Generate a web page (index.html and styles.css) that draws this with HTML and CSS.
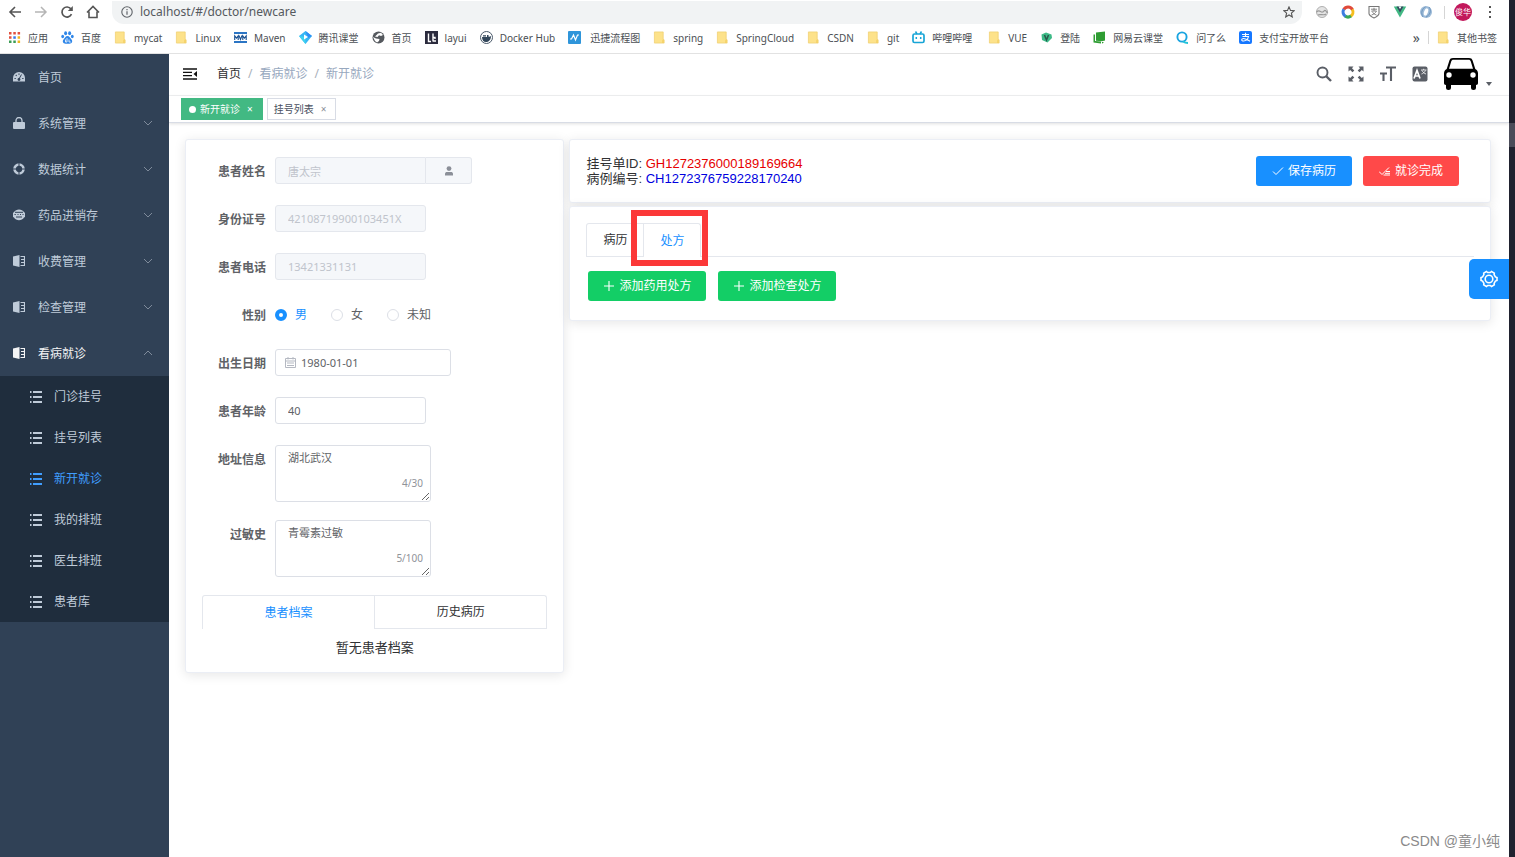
FILE: index.html
```html
<!DOCTYPE html>
<html lang="zh-CN">
<head>
<meta charset="utf-8">
<title>新开就诊</title>
<link rel="stylesheet" href="styles.css">
</head>
<body>
<svg class="sprite" aria-hidden="true">
  <symbol id="folder" viewBox="0 0 13 14"><path d="M1 1h9.500v8.500h1v3.500H1z" fill="#fde28a" stroke="#f0d070" stroke-width=".8"/><path d="M9.500 13V10l1.500-1v4z" fill="#f3cf62"/></symbol>
  <symbol id="chevron" viewBox="0 0 10 10"><path d="M1 3l4 4 4-4" fill="none" stroke="currentColor" stroke-width="1"/></symbol>
  <symbol id="list" viewBox="0 0 12 12"><path d="M0 0h1.500v2H0zM3 0h9v2H3zM0 5h1.500v2H0zM3 5h9v2H3zM0 10h1.500v2H0zM3 10h9v2H3z" fill="currentColor"/></symbol>
  <symbol id="book" viewBox="0 0 12 12"><path d="M0 1.500L6.500 0v12L0 10.500z" fill="currentColor"/><path d="M7.500 1.500h4v9h-4M8 4.500h3M8 7.500h3" fill="none" stroke="currentColor" stroke-width="1.200"/></symbol>
  <symbol id="plus" viewBox="0 0 12 12"><path d="M6 1v10M1 6h10" stroke="currentColor" stroke-width="1.100"/></symbol>
</svg>

<div class="window">
  <header class="browser">
    <div class="toolbar">
      <button class="nav-btn" aria-label="后退"><svg viewBox="0 0 14 14"><path d="M13 7H2M7 2L2 7l5 5" fill="none" stroke="#555" stroke-width="1.600"/></svg></button>
      <button class="nav-btn" aria-label="前进"><svg viewBox="0 0 14 14"><path d="M1 7h11M7 2l5 5-5 5" fill="none" stroke="#b5b5b5" stroke-width="1.500"/></svg></button>
      <button class="nav-btn" aria-label="刷新"><svg viewBox="0 0 14 14"><path d="M11.500 9.200A5 5 0 1 1 11 4" fill="none" stroke="#555" stroke-width="1.700"/><path d="M12.800 1v5H7.800z" fill="#555"/></svg></button>
      <button class="nav-btn" aria-label="主页"><svg viewBox="0 0 14 14"><path d="M1 7.500L7 1.500l6 6M3 6.500v6h8v-6" fill="none" stroke="#555" stroke-width="1.600"/></svg></button>
      <div class="address">
        <svg class="i12" viewBox="0 0 12 12"><circle cx="6" cy="6" r="5.200" fill="none" stroke="#5f6368" stroke-width="1.100"/><path d="M6 5.200v3.500M6 3v1.200" stroke="#5f6368" stroke-width="1.200"/></svg>
        <input class="url" type="text" aria-label="地址" value="localhost/#/doctor/newcare">
        <button class="star" aria-label="收藏"><svg class="i12" viewBox="0 0 12 12"><path d="M6 .9l1.500 3.500 3.800.3-2.900 2.500.9 3.800L6 9 2.700 11l.9-3.800L.7 4.700l3.800-.3z" fill="none" stroke="#555" stroke-width="1.100"/></svg></button>
      </div>
      <div class="extensions">
        <svg viewBox="0 0 14 14"><circle cx="7" cy="7" r="5.500" fill="#e4e4e4" stroke="#b0b0b0"/><path d="M1.500 7c3-3 4 .5 6 0S9 4.500 10.500 5.500 11 8 13 7M3 10c2-1.500 6 1 8-1" fill="none" stroke="#999" stroke-width="1.200"/></svg>
        <svg viewBox="0 0 14 14" fill="none" stroke-width="3"><path d="M2.800 4.500A5 5 0 0 1 11.500 4.800" stroke="#e04a3a"/><path d="M11.300 4.500A5 5 0 0 1 9.500 11.300" stroke="#f5bd1c"/><path d="M10 11A5 5 0 0 1 4 11" stroke="#3aa757"/><path d="M4.500 11.300A5 5 0 0 1 2.800 4.300" stroke="#3c7de0"/></svg>
        <svg viewBox="0 0 14 14"><path d="M2 1.500h10v7c0 2-3 3.500-5 4.500-2-1-5-2.500-5-4.500z" fill="none" stroke="#777" stroke-width="1.100"/><path d="M4 4.200h6M7 2.800v3M4.500 6h5C8.500 8 6.500 9.500 4.500 10M5 6.500c1 1.500 2.500 3 4.500 3.500" fill="none" stroke="#777" stroke-width=".9"/></svg>
        <svg viewBox="0 0 14 14"><path d="M.8 1.500h12.400L7 12.500z" fill="#41b883"/><path d="M3.500 1.500h7L7 7.500z" fill="#35495e"/><path d="M5.500 1.500h3L7 4z" fill="#fff"/></svg>
        <svg viewBox="0 0 14 14"><circle cx="7" cy="7" r="6" fill="#9dbbd8"/><path d="M4 12C1.500 8 3 3.500 6.500 2M10 2c3 4 .5 8.500-3 10" fill="none" stroke="#6d94bd"/><ellipse cx="7" cy="7" rx="1.900" ry="3.800" fill="#fff" transform="rotate(20 7 7)"/></svg>
      </div>
      <span class="rule"></span>
      <button class="profile">俊华</button>
      <button class="more" aria-label="菜单"><svg viewBox="0 0 4 14"><path d="M1 1h2v2H1zM1 6h2v2H1zM1 11h2v2H1z" fill="#555"/></svg></button>
    </div>
    <nav class="bookmarks">
      <a href="#"><svg viewBox="0 0 13 13"><path d="M1 1h2.500v2.500H1zM5.300 1h2.500v2.500H5.300zM9.600 1h2.500v2.500H9.600zM1 5.300h2.500v2.500H1z" fill="#e2503f"/><path d="M5.300 5.300h2.500v2.500H5.300z" fill="#3b78e7"/><path d="M1 9.600h2.500v2.500H1zM5.300 9.600h2.500v2.500H5.300z" fill="#3c9d55"/><path d="M9.600 5.300h2.500v2.500H9.600zM9.600 9.600h2.500v2.500H9.600z" fill="#f0b51e"/></svg>应用</a>
      <a href="#"><svg viewBox="0 0 13 13" fill="#2f86e8"><ellipse cx="4.600" cy="2.300" rx="1.500" ry="2"/><ellipse cx="8.600" cy="2.300" rx="1.500" ry="2"/><ellipse cx="1.700" cy="5.500" rx="1.400" ry="1.800"/><ellipse cx="11.300" cy="5.500" rx="1.400" ry="1.800"/><path d="M6.500 5c2 0 2.500 2 4 3.500 1.600 2 .2 4.200-2 4.200H4.500c-2.200 0-3.600-2.200-2-4.200C4 7 4.500 5 6.500 5z"/><path d="M4.500 8.500v2.500h1.500V7M8 8.500v2.500h1.800" stroke="#fff" stroke-width=".8" fill="none"/></svg>百度</a>
      <a href="#"><svg><use href="#folder"/></svg>mycat</a>
      <a href="#"><svg><use href="#folder"/></svg>Linux</a>
      <a href="#"><svg viewBox="0 0 13 13"><path d="M0 1h13v2H0zM0 10h13v2H0z" fill="#2b75c4"/><path d="M.7 9V4.800L2.500 7l1.700-2.200V9M5 4.500L6.500 8.500 8 4.500M8.800 9V4.800l1.700 2.200 1.700-2.200V9" fill="none" stroke="#174f91" stroke-width="1.100"/></svg>Maven</a>
      <a href="#"><svg viewBox="0 0 13 13"><path d="M6.500 0L13 5 6.500 13 0 5z" fill="#36b6f5"/><path d="M0 5l6.500 8V6z" fill="#3ed2ee"/><path d="M6.500 0L13 5 9 7z" fill="#2e8df5"/><path d="M5 3.500L9 6 5 8.500z" fill="#fff"/></svg>腾讯课堂</a>
      <a href="#"><svg viewBox="0 0 13 13"><circle cx="6.500" cy="6.500" r="6" fill="#55595e"/><path d="M6 2.500l3-.8 2 2.300-2 1-2-.8L5.500 6 3 5.500zM1 6l3 1.500 3.500.5-.5 2-2 1.500L3 10z" fill="#fff"/></svg>首页</a>
      <a href="#"><svg viewBox="0 0 13 13"><path d="M0 0h13v13H0z" fill="#2b2b3d"/><path d="M3.500 2.500v8H6M8 2.500v8M8 6.500h2v1.500M8 10h3" fill="none" stroke="#fff" stroke-width="1.400"/></svg>layui</a>
      <a href="#"><svg viewBox="0 0 13 13"><circle cx="6.500" cy="6.500" r="6" fill="#fff" stroke="#4b5a6b"/><path d="M2 6h5V4h1.500v1.500c1 .5 1.500 0 2.500-.5 0 4-2.500 6-5 6S2 9 2 6zM3 4.200h3v1.300H3z" fill="#33475b"/></svg>Docker Hub</a>
      <a href="#" class="wide-gap"><svg viewBox="0 0 13 13"><rect width="13" height="13" rx="1" fill="#2f95da"/><path d="M2 8h1.500L5.500 4l2 5 2-5H11" fill="none" stroke="#fff" stroke-width="1.200"/></svg>迅捷流程图</a>
      <a href="#"><svg><use href="#folder"/></svg>spring</a>
      <a href="#"><svg><use href="#folder"/></svg>SpringCloud</a>
      <a href="#"><svg><use href="#folder"/></svg>CSDN</a>
      <a href="#"><svg><use href="#folder"/></svg>git</a>
      <a href="#"><svg viewBox="0 0 13 13"><rect x="1" y="3" width="11" height="8.500" rx="1.500" fill="none" stroke="#18a5d6" stroke-width="1.700"/><path d="M3.500.5L5 3M9.500.5L8 3M4.300 6v2M8.700 6v2" stroke="#18a5d6" stroke-width="1.500"/></svg>哔哩哔哩</a>
      <a href="#" class="spaced"><svg><use href="#folder"/></svg>VUE</a>
      <a href="#"><svg viewBox="0 0 13 13"><path d="M1.500 3.500L6 1.500l5.500 2L12 7l-4.500 4.500L2 9z" fill="#3dba87"/><path d="M4.500 4L6.500 9l2-5" fill="none" stroke="#27584a" stroke-width="1.500"/></svg>登陆</a>
      <a href="#"><svg viewBox="0 0 13 13"><path d="M3 1.500L12 .5v9l-3 .7-6-.5z" fill="#2f9d33"/><path d="M.5 3.500H2V10l6 .5v2L.5 11.500zM9 11h2l-2 1.800z" fill="#2f9d33"/></svg>网易云课堂</a>
      <a href="#"><svg viewBox="0 0 13 13"><circle cx="6" cy="6" r="4.600" fill="none" stroke="#1aa4e0" stroke-width="1.900"/><path d="M7 10.500c2 1.500 3 1.500 5 1.500" fill="none" stroke="#24c4d9" stroke-width="1.800"/></svg>问了么</a>
      <a href="#"><svg viewBox="0 0 13 13"><rect width="13" height="13" rx="2" fill="#1677ff"/><path d="M3 3.500h7M6.500 1.800v3.700M3.500 5.500h6c-.7 3-3 4.500-5 4.500-2.500 0-2.300-2.500 0-2.500 2 0 4 1.500 6.500 2.800" fill="none" stroke="#fff" stroke-width="1.100"/></svg>支付宝开放平台</a>
      <div class="bookmarks-end">
        <button class="overflow" aria-label="更多书签">»</button>
        <span class="rule"></span>
        <a href="#"><svg><use href="#folder"/></svg>其他书签</a>
      </div>
    </nav>
  </header>

  <div class="app">
    <aside class="sidebar">
      <nav>
        <a class="menu-item" href="#"><svg viewBox="0 0 12 12"><path d="M6 1a6 6 0 0 1 6 6v3.500H0V7a6 6 0 0 1 6-6z" fill="currentColor"/><path d="M6 2.500v1.200M2.800 4l.8.800M1.500 7.500h1.300M9.200 7.500h1.300" stroke="#304156" stroke-width="1.200"/><path d="M8.500 3.500L6 8" stroke="#304156"/><circle cx="6" cy="8.500" r="1.400" fill="#304156"/></svg><span>首页</span></a>
        <button class="menu-item"><svg viewBox="0 0 12 12"><path d="M3 6V3.500a3 3 0 0 1 6 0V6" fill="none" stroke="currentColor" stroke-width="1.300"/><rect y="5" width="12" height="7" rx="1" fill="currentColor"/></svg><span>系统管理</span><svg class="arrow"><use href="#chevron"/></svg></button>
        <button class="menu-item"><svg viewBox="0 0 12 12"><circle cx="6" cy="6" r="4.500" fill="none" stroke="currentColor" stroke-width="2.600"/><path d="M6 0v3M6 9v3M0 6h3M9 6h3" stroke="#304156" stroke-width="1"/></svg><span>数据统计</span><svg class="arrow"><use href="#chevron"/></svg></button>
        <button class="menu-item"><svg viewBox="0 0 12 12"><path d="M1 3C3-.500 9-.500 11 3l1 1v4l-1 .5C9 12 3 12 1 8.500L0 8V4z" fill="currentColor"/><path d="M2 3.300h8M3 8h6M1.500 5.500h1.300M4.500 5.500h1M7 5.500h1M9.500 5.500h1" stroke="#304156" stroke-width="1"/></svg><span>药品进销存</span><svg class="arrow"><use href="#chevron"/></svg></button>
        <button class="menu-item"><svg><use href="#book"/></svg><span>收费管理</span><svg class="arrow"><use href="#chevron"/></svg></button>
        <button class="menu-item"><svg><use href="#book"/></svg><span>检查管理</span><svg class="arrow"><use href="#chevron"/></svg></button>
        <button class="menu-item open"><svg><use href="#book"/></svg><span>看病就诊</span><svg class="arrow"><use href="#chevron"/></svg></button>
        <div class="submenu">
          <a href="#"><svg><use href="#list"/></svg>门诊挂号</a>
          <a href="#"><svg><use href="#list"/></svg>挂号列表</a>
          <a href="#" class="current"><svg><use href="#list"/></svg>新开就诊</a>
          <a href="#"><svg><use href="#list"/></svg>我的排班</a>
          <a href="#"><svg><use href="#list"/></svg>医生排班</a>
          <a href="#"><svg><use href="#list"/></svg>患者库</a>
        </div>
      </nav>
    </aside>

    <main class="main">
      <div class="navbar">
        <button class="fold" aria-label="折叠菜单"><svg viewBox="0 0 14 12"><path d="M0 1h14M0 4.300h9M0 7.700h9M0 11h14" stroke="#111" stroke-width="1.300"/><path d="M14 3v6l-3.500-3z" fill="#111"/></svg></button>
        <nav class="breadcrumb"><a href="#">首页</a><i>/</i><span>看病就诊</span><i>/</i><span>新开就诊</span></nav>
        <div class="tools">
          <button aria-label="搜索"><svg viewBox="0 0 16 16"><circle cx="6.500" cy="6.500" r="5" fill="none" stroke="#5a5e66" stroke-width="1.900"/><path d="M10 10l5 5" stroke="#5a5e66" stroke-width="2.400"/></svg></button>
          <button aria-label="全屏"><svg viewBox="0 0 16 16"><path d="M.5.500h5L4 2.200l2.300 2.300-1.800 1.800L2.200 4 .5 5.500zM15.500.500v5L13.800 4l-2.300 2.300-1.800-1.800L12 2.200 10.500.500zM.5 15.500v-5L2.200 12l2.300-2.300 1.800 1.800L4 13.800l1.500 1.700zM15.500 15.500h-5l1.500-1.700-2.300-2.300 1.800-1.800 2.300 2.300 1.700-1.500z" fill="#5a5e66"/></svg></button>
          <button aria-label="字号"><svg viewBox="0 0 16 16"><path d="M6 1.500h10M11 1.500V15M0 7.500h7M3.500 7.500V15" stroke="#5a5e66" stroke-width="2.100"/></svg></button>
          <button aria-label="语言"><svg viewBox="0 0 16 16"><rect x=".5" y=".5" width="15" height="15" rx="2" fill="#5a5e66"/><path d="M2 12.500L5 4.500l3 8M3 10h4" fill="none" stroke="#fff" stroke-width="1.700"/><path d="M9 4h5.500M11.700 2.800V4M10 4.500c1 2 2.500 3 4 3.500M13.500 4.500c-1 2-2.500 3-4 3.500" fill="none" stroke="#fff" stroke-width=".8"/></svg></button>
          <button class="avatar" aria-label="用户菜单"><svg class="car" viewBox="0 0 34 34"><path d="M9 1h16c2 0 3 .8 3.600 2.500L31.300 12c1.700.8 2.700 2.300 2.700 4.500V26c0 1.200-.6 2-2 2v2.500a2.500 2.500 0 0 1-5 0V28H7v2.500a2.500 2.500 0 0 1-5 0V28c-1.400 0-2-.8-2-2v-9.500C0 14.300 1 12.800 2.700 12L5.400 3.500C6 1.800 7 1 9 1zM9.500 2.800c-1.300 0-1.900.5-2.300 1.700L5 11.700h24l-2.200-7.200c-.4-1.200-1-1.700-2.300-1.700z" fill="#000" fill-rule="evenodd"/><circle cx="5" cy="18" r="2.700" fill="#fff"/><circle cx="29" cy="18" r="2.700" fill="#fff"/></svg><svg class="caret" viewBox="0 0 6 4"><path d="M0 0h6L3 4z" fill="#5a5e66"/></svg></button>
        </div>
      </div>
      <div class="tags">
        <a href="#" class="tag on"><b class="dot"></b>新开就诊<i>×</i></a>
        <a href="#" class="tag">挂号列表<i>×</i></a>
      </div>

      <div class="content">
        <section class="card patient">
          <form>
            <div class="row"><label for="name">患者姓名</label><div class="group"><input id="name" class="field" type="text" value="唐太宗" disabled><button type="button" class="append" aria-label="选择患者"><svg viewBox="0 0 10 10"><circle cx="5" cy="2.600" r="2.400" fill="#8b8f98"/><path d="M1 9.500V8c0-1.500 1-2 2-2h4c1 0 2 .5 2 2v1.500z" fill="#8b8f98"/></svg></button></div></div>
            <div class="row"><label for="card-no">身份证号</label><input id="card-no" class="field" type="text" value="42108719900103451X" disabled></div>
            <div class="row"><label for="phone">患者电话</label><input id="phone" class="field" type="text" value="13421331131" disabled></div>
            <div class="row"><span class="label">性别</span><div class="radios">
              <label><input type="radio" name="sex" checked>男</label>
              <label><input type="radio" name="sex">女</label>
              <label><input type="radio" name="sex">未知</label></div></div>
            <div class="row"><label for="birth">出生日期</label><div class="date"><svg viewBox="0 0 11 11"><path d="M.5 1.500h10v9H.5zM.5 4h10M3 0v2.500M8 0v2.500M2 6h7M2 8.500h7" fill="none" stroke="#b5b9c2"/></svg><input id="birth" type="text" value="1980-01-01"></div></div>
            <div class="row"><label for="age">患者年龄</label><input id="age" class="field" type="text" value="40"></div>
            <div class="row area"><label for="addr">地址信息</label><div class="counted"><textarea id="addr">湖北武汉</textarea><span>4/30</span></div></div>
            <div class="row area"><label for="allergy">过敏史</label><div class="counted"><textarea id="allergy">青霉素过敏</textarea><span>5/100</span></div></div>
          </form>
          <div class="tabs wide" role="tablist">
            <button role="tab" class="tab active" aria-selected="true">患者档案</button>
            <button role="tab" class="tab" aria-selected="false">历史病历</button>
          </div>
          <p class="empty">暂无患者档案</p>
        </section>

        <div class="side">
          <section class="card summary">
            <div class="ids">
              <div>挂号单ID: <span class="reg">GH1272376000189169664</span></div>
              <div>病例编号: <span class="case">CH1272376759228170240</span></div>
            </div>
            <div class="actions">
              <button class="btn blue"><svg viewBox="0 0 12 12"><path d="M1 6.500L4 9.500l7-7" fill="none" stroke="currentColor"/></svg>保存病历</button>
              <button class="btn red"><svg viewBox="0 0 12 12"><path d="M0 6.500L3 9.500l7-7M7 6.500h4M6 8.300h5M4.500 10h6.500" fill="none" stroke="currentColor"/></svg>就诊完成</button>
            </div>
          </section>
          <section class="card orders">
            <div class="tabs" role="tablist">
              <button role="tab" class="tab" aria-selected="false">病历</button>
              <button role="tab" class="tab active marked" aria-selected="true">处方</button>
            </div>
            <div class="adders">
              <button class="btn green"><svg><use href="#plus"/></svg>添加药用处方</button>
              <button class="btn green"><svg><use href="#plus"/></svg>添加检查处方</button>
            </div>
          </section>
        </div>
      </div>
      <button class="settings" aria-label="设置"><svg viewBox="0 0 20 20" fill="none" stroke="#fff"><path d="M7.500 2.500l1.200 1h2.600l1.200-1 2.800 1.600-.2 1.600 1.300 2.200 1.600.6v3l-1.600.6-1.300 2.200.2 1.600-2.800 1.600-1.200-1H8.700l-1.200 1-2.800-1.600.2-1.600-1.300-2.200L2 11.500v-3l1.600-.6 1.300-2.200-.2-1.600z" stroke-width="1.600"/><circle cx="10" cy="10" r="3.800" stroke-width="1.600"/></svg></button>
      <div class="credit">CSDN @童小纯</div>
    </main>
  </div>
</div>
<div class="edge"><span class="thumb"></span></div>
</body>
</html>
```
FILE: styles.css
```css
* { box-sizing: border-box; }
body {
  margin: 0;
  min-height: 100vh;
  display: flex;
  background: #fff;
  color: #303133;
  font: 12px/16px "Noto Sans", "Noto Sans CJK SC", sans-serif;
}
button, input, textarea { font: inherit; color: inherit; }
button { padding: 0; border: 0; background: none; cursor: pointer; }
a { color: inherit; text-decoration: none; }
i, b { font-style: normal; font-weight: 400; }
svg { display: block; flex: none; }
.sprite { position: absolute; width: 0; height: 0; }
.i12 { width: 12px; height: 12px; }

.window { flex: 1; min-width: 0; display: flex; flex-direction: column; }
.edge { width: 6px; padding-top: 123px; background: #20222f; }
.thumb { display: block; height: 24px; background: #4a4c59; }

/* browser chrome */
.browser { border-bottom: 1px solid #e2e2e2; }
.toolbar { display: flex; align-items: center; height: 24px; padding: 0 17px 0 8px; }
.nav-btn { width: 14px; margin-right: 12px; }
.nav-btn svg { width: 14px; height: 14px; }
.address {
  flex: 1;
  display: flex;
  align-items: center;
  gap: 7px;
  height: 23px;
  padding: 0 7px 0 9px;
  border-radius: 0 0 12px 12px;
  background: #f1f3f4;
}
.url { flex: 1; padding: 0; border: 0; background: none; outline: 0; color: #55595e; }
.extensions { display: flex; gap: 12px; margin-left: 13px; }
.extensions svg { width: 14px; height: 14px; }
.rule { width: 1px; height: 13px; background: #d5d5d5; }
.toolbar .rule { margin: 0 9px 0 11px; }
.profile { width: 18px; height: 18px; border-radius: 50%; background: #c2185b; color: #fff; font-size: 8px; line-height: 18px; white-space: nowrap; }
.more { margin-left: 16px; }
.more svg { width: 4px; height: 14px; }

.bookmarks { display: flex; align-items: center; gap: 13px; height: 29px; padding: 0 12px 2px 8px; color: #4b4f54; font-size: 10px; white-space: nowrap; }
.bookmarks a { display: flex; align-items: center; gap: 7px; }
.bookmarks svg { width: 13px; height: 13px; }
.bookmarks .wide-gap { gap: 9px; }
.bookmarks .spaced { margin-left: 3px; }
.bookmarks-end { display: flex; align-items: center; gap: 8px; margin-left: auto; }
.overflow { font-size: 14px; }

/* application shell */
.app { flex: 1; display: flex; }
.sidebar { width: 169px; background: #304156; color: #bfcbd9; }
.menu-item { display: flex; align-items: center; gap: 13px; width: 100%; height: 46px; padding: 0 16px 0 13px; text-align: left; }
.menu-item svg { width: 12px; height: 12px; }
.menu-item span { padding-top: 2px; }
.menu-item .arrow { width: 10px; height: 10px; margin-left: auto; color: #7f8b9b; }
.menu-item.open { color: #f4f4f5; }
.menu-item.open .arrow { transform: rotate(180deg); }
.submenu { background: #1f2d3d; }
.submenu a { display: flex; align-items: center; gap: 12px; height: 41px; padding-left: 30px; }
.submenu svg { width: 12px; height: 12px; }
.submenu .current { color: #409eff; }

.main { flex: 1; min-width: 0; position: relative; }
.navbar { display: flex; align-items: center; height: 42px; padding: 0 17px 2px 14px; border-bottom: 1px solid #f0f1f2; }
.fold svg { width: 14px; height: 12px; }
.breadcrumb { display: flex; gap: 7px; margin-left: 20px; color: #97a8be; }
.breadcrumb i { color: #a9b0ba; }
.breadcrumb a { color: #303133; }
.tools { display: flex; align-items: center; gap: 16px; margin-left: auto; }
.tools svg { width: 16px; height: 16px; }
.tools .avatar { display: flex; align-items: flex-end; gap: 8px; }
.tools .car { width: 34px; height: 34px; }
.tools .caret { width: 6px; height: 4px; margin-bottom: 5px; }

.tags { display: flex; gap: 4px; height: 27px; padding: 2px 12px; border-bottom: 1px solid #d8dce5; box-shadow: 0 1px 3px rgba(0, 0, 0, .12); }
.tag { display: flex; align-items: center; height: 22px; padding: 0 9px 0 6px; border: 1px solid #d8dce5; color: #495060; font-size: 10px; }
.tag i { margin-left: 7px; color: #8a8f98; }
.tag.on { padding-left: 7px; border-color: #42b983; background: #42b983; color: #fff; }
.tag.on i { color: #fff; }
.dot { width: 7px; height: 7px; margin-right: 4px; border-radius: 50%; background: #fff; }

.content { display: grid; grid-template-columns: 7fr 17fr; align-items: start; gap: 5px; padding: 16px 18px 16px 16px; }
.card { border: 1px solid #ebeef5; border-radius: 3px; background: #fff; box-shadow: 0 2px 12px rgba(0, 0, 0, .1); }

/* patient form */
.patient { padding: 17px 16px 16px; }
.row { display: flex; align-items: center; gap: 9px; min-height: 27px; margin-bottom: 21px; color: #606266; }
.row > label, .row > .label { width: 64px; padding-top: 2px; text-align: right; font-weight: 700; white-space: nowrap; }
.row.area { align-items: flex-start; margin-bottom: 18px; }
.row.area > label { padding-top: 7px; }
.field { width: 151px; height: 27px; padding: 0 12px; border: 1px solid #dcdfe6; border-radius: 3px; background: #fff; font-size: 11px; }
.field:disabled { border-color: #e4e7ed; background: #f5f7fa; color: #c0c4cc; }
.group { display: flex; }
.group .field { border-radius: 3px 0 0 3px; }
.append { display: flex; align-items: center; justify-content: center; width: 46px; border: 1px solid #e4e7ed; border-left: 0; border-radius: 0 3px 3px 0; background: #f5f7fa; }
.append svg { width: 10px; height: 10px; }
.radios { display: flex; gap: 24px; }
.radios label { display: flex; align-items: center; gap: 8px; }
.radios label:has(:checked) { color: #1890ff; }
.radios input { appearance: none; width: 12px; height: 12px; margin: 0; border: 1px solid #dcdfe6; border-radius: 50%; background: #fff; }
.radios input:checked { border: 4px solid #1890ff; }
.date { display: flex; align-items: center; gap: 5px; width: 176px; height: 27px; padding: 0 9px; border: 1px solid #dcdfe6; border-radius: 3px; }
.date svg { width: 11px; height: 11px; }
.date input { min-width: 0; flex: 1; padding: 0; border: 0; outline: 0; font-size: 11px; }
.counted { position: relative; }
.counted textarea { display: block; width: 156px; height: 57px; padding: 4px 12px; border: 1px solid #dcdfe6; border-radius: 3px; outline: 0; font-size: 11px; }
.counted span { position: absolute; right: 8px; bottom: 11px; color: #909399; font-size: 10px; }

.tabs { display: flex; border-bottom: 1px solid #e4e7ed; }
.tab { position: relative; height: 33px; padding: 0 16px; border: 1px solid #e4e7ed; border-bottom: 0; }
.tab + .tab { border-left: 0; border-radius: 0 3px 0 0; }
.tab:first-child { border-radius: 3px 0 0 0; border-right: 1px solid #e4e7ed; }
.tab.active { margin-bottom: -1px; height: 34px; background: #fff; color: #1890ff; }
.wide .tab { flex: 1; }
.empty { margin: 9px 0 0; text-align: center; font-size: 13px; line-height: 18px; }

/* visit panels */
.side { display: grid; gap: 3px; }
.summary { display: flex; justify-content: space-between; padding: 16px 31px 16px 16px; }
.ids { font: 13px/15px "Liberation Sans", "Noto Sans CJK SC", sans-serif; }
.reg { color: #e60000; }
.case { color: #0000e0; }
.actions { display: flex; gap: 11px; }
.btn { display: flex; align-items: center; justify-content: center; gap: 4px; height: 30px; padding: 0 16px; border-radius: 3px; color: #fff; }
.btn svg { width: 12px; height: 12px; }
.blue { background: #1890ff; }
.red { background: #ff4949; }
.green { background: #13ce66; }
.orders { padding: 16px 16px 19px; }
.marked::after {
  content: "";
  position: absolute;
  inset: -14px -8px -9px -13px;
  border: 6px solid #fb3838;
  pointer-events: none;
}
.adders { display: flex; gap: 12px; padding: 14px 2px 0; }
.adders .btn { padding: 0 15px; }

.settings { position: absolute; right: 0; top: 205px; display: flex; align-items: center; justify-content: center; width: 40px; height: 40px; border-radius: 5px 0 0 5px; background: #1890ff; }
.settings svg { width: 20px; height: 20px; }
.credit { position: absolute; right: 9px; bottom: 6px; color: #8a8a8a; font: 14px/20px "Liberation Sans", "Noto Sans CJK SC", sans-serif; }
```
